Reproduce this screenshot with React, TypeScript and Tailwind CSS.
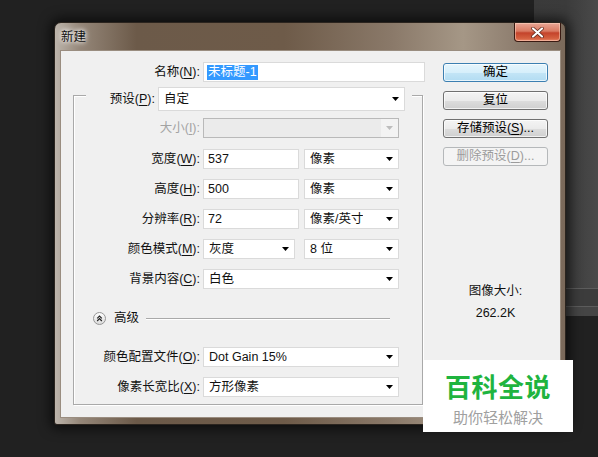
import React from 'react';

const F = "font-['Liberation_Sans','Noto_Sans_CJK_SC',sans-serif]";

function Mn({ pre, k }: { pre: string; k: string }) {
  return (
    <>
      {pre}(<span className="underline underline-offset-[2px]">{k}</span>):
    </>
  );
}

function Caret({ c = '#000' }: { c?: string }) {
  return (
    <svg width="7" height="4" viewBox="0 0 7 4" className="shrink-0">
      <path d="M0 0h7L3.5 4z" fill={c} />
    </svg>
  );
}

function Select({ w, v, h = 'h-[20px]' }: { w: string; v: string; h?: string }) {
  return (
    <div className={`${w} ${h} flex items-center justify-between border border-[#dadada] bg-white pl-[5px] pr-[5px]`}>
      <span className="truncate">{v}</span>
      <Caret />
    </div>
  );
}

function Field({ w, v }: { w: string; v: string }) {
  return (
    <div className={`${w} h-[20px] flex items-center border border-[#dadada] bg-white pl-[4px]`}>
      {v}
    </div>
  );
}

function Btn({ children, kind = 'normal' }: { children: React.ReactNode; kind?: 'default' | 'normal' | 'disabled' }) {
  const styles = {
    default:
      'border-[#3c7fb1] bg-[linear-gradient(#e6f5fc_0%,#d6effb_50%,#c3e5f6_51%,#b2dcf2_100%)] shadow-[inset_0_0_0_1px_rgba(255,255,255,0.7)] text-black',
    normal:
      'border-[#707070] bg-[linear-gradient(#f4f4f4_0%,#ebebeb_50%,#dddddd_51%,#cfcfcf_100%)] shadow-[inset_0_0_0_1px_rgba(255,255,255,0.7)] text-black',
    disabled: 'border-[#b5b8ba] bg-[#f4f4f4] text-[#9c9c9c]',
  }[kind];
  return (
    <div className={`h-[19px] w-[105px] rounded-[3px] border flex items-center justify-center leading-none ${styles}`}>
      {children}
    </div>
  );
}

function Row({ label, children, cls = 'mt-[10px]', dim = false }: { label: React.ReactNode; children: React.ReactNode; cls?: string; dim?: boolean }) {
  return (
    <div className={`flex items-center h-[20px] ${cls}`}>
      <div className={`w-[126px] shrink-0 text-right whitespace-nowrap ${dim ? 'text-[#a3a3a3]' : ''}`}>{label}</div>
      <div className="ml-[3px] flex items-center gap-[5px]">{children}</div>
    </div>
  );
}

function AdvIcon() {
  return (
    <svg width="13" height="13" viewBox="0 0 13 13" className="shrink-0">
      <defs>
        <linearGradient id="adv" x1="0" y1="0" x2="0" y2="1">
          <stop offset="0" stopColor="#ffffff" />
          <stop offset="1" stopColor="#d9d9d9" />
        </linearGradient>
      </defs>
      <circle cx="6.5" cy="6.5" r="6" fill="url(#adv)" stroke="#969696" />
      <path d="M4.2 6.3L6.5 4L8.8 6.3M4.2 9L6.5 6.7L8.8 9" fill="none" stroke="#222" strokeWidth="1.2" />
    </svg>
  );
}

export default function App() {
  return (
    <div className={`relative w-[598px] h-[457px] overflow-hidden bg-[#212121] flex justify-end text-[12.5px] text-[#111] ${F}`}>
      {/* app panel behind the dialog */}
      <div className="w-[64px] flex flex-col">
        <div className="h-[288px] bg-[linear-gradient(to_right,#3a3a3a_0%,#3b3b3b_50%,#4a4a4a_100%)]" />
        <div className="h-[1px] bg-[#5c5c5c]" />
        <div className="h-[17px] bg-[#3c3c3c]" />
        <div className="h-[1px] bg-[#5c5c5c]" />
        <div className="h-[9px] bg-[#454545]" />
      </div>

      {/* dialog window */}
      <div className="absolute left-[54px] top-[22px] w-[512px] h-[403px] rounded-t-[7px] rounded-b-[3px] border border-[#2b241e] bg-[linear-gradient(to_right,#bcb4ab_0%,#948678_5%,#6c5a49_16%,#6e5b49_45%,#8a7969_66%,#a59786_80%,#8f7f70_90%,#7a695a_100%)] shadow-[0_0_12px_4px_rgba(0,0,0,0.6)] flex flex-col">
        <div className="h-[27px] shrink-0 flex items-start justify-between">
          <span className="pl-[6px] mt-[6px] text-[12.5px] leading-[16px] text-[#111] [text-shadow:0_0_6px_#fff,0_0_4px_#fff]">新建</span>
          <div className="mr-[4px] w-[47px] h-[19px] rounded-b-[4px] border border-t-0 border-[#3a1a12] bg-[linear-gradient(#e9a796_0%,#d97a62_45%,#c4432b_55%,#d4603f_85%,#e8866a_100%)] flex items-center justify-center shadow-[inset_0_0_0_1px_rgba(255,220,200,0.5)]">
            <svg width="13" height="11" viewBox="0 0 13 11">
              <path d="M2 1.5L11 9.5M11 1.5L2 9.5" stroke="#5a2418" strokeWidth="3.6" strokeLinecap="round" />
              <path d="M2 1.5L11 9.5M11 1.5L2 9.5" stroke="#fff" strokeWidth="2.2" strokeLinecap="round" />
            </svg>
          </div>
        </div>

        <div className="ml-[5px] w-[501px] h-[368px] border border-[#9a8d80] bg-[#f0f0f0] flex">
          {/* form column */}
          <div className="w-[364px] pl-[12px] flex flex-col">
            <div className="mt-[11px] flex items-center h-[20px]">
              <div className="w-[127px] text-right whitespace-nowrap">
                <Mn pre="名称" k="N" />
              </div>
              <div className="ml-[3px] w-[222px] h-[20px] flex items-center border border-[#dadada] bg-white pl-[3px]">
                <span className="bg-[#3399ff] text-white leading-[15px] px-[1px]">未标题-1</span>
              </div>
            </div>

            <div className="mt-[13px] w-[350px] border border-[#a9a9a9] shadow-[inset_1px_1px_0_#fff,1px_1px_0_#fff] pb-[7px] flex flex-col">
              <div className="-mt-[9px] ml-[12px] w-[326px] h-[24px] bg-[#f0f0f0] flex items-center">
                <div className="w-[69px] text-right whitespace-nowrap">
                  <Mn pre="预设" k="P" />
                </div>
                <div className="ml-[3px]">
                  <Select w="w-[247px]" h="h-[24px]" v="自定" />
                </div>
              </div>

              <Row label={<Mn pre="大小" k="I" />} cls="mt-[7px]" dim>
                <div className="w-[196px] h-[20px] flex border border-[#b9b9b9] bg-[#ebebeb]">
                  <div className="flex-1" />
                  <div className="w-[17px] bg-[#f3f3f3] flex items-center justify-center">
                    <Caret c="#bdbdbd" />
                  </div>
                </div>
              </Row>
              <Row label={<Mn pre="宽度" k="W" />} cls="mt-[11px]">
                <Field w="w-[96px]" v="537" />
                <Select w="w-[95px]" v="像素" />
              </Row>
              <Row label={<Mn pre="高度" k="H" />}>
                <Field w="w-[96px]" v="500" />
                <Select w="w-[95px]" v="像素" />
              </Row>
              <Row label={<Mn pre="分辨率" k="R" />}>
                <Field w="w-[96px]" v="72" />
                <Select w="w-[95px]" v="像素/英寸" />
              </Row>
              <Row label={<Mn pre="颜色模式" k="M" />}>
                <Select w="w-[92px]" v="灰度" />
                <div className="ml-[4px]">
                  <Select w="w-[95px]" v="8 位" />
                </div>
              </Row>
              <Row label={<Mn pre="背景内容" k="C" />}>
                <Select w="w-[196px]" v="白色" />
              </Row>

              <div className="mt-[22px] h-[14px] flex items-center pl-[19px] mr-[32px]">
                <AdvIcon />
                <span className="ml-[8px]">高级</span>
                <div className="ml-[7px] flex-1 h-[1px] bg-[#a9a9a9] shadow-[0_1px_0_#fff]" />
              </div>

              <Row label={<Mn pre="颜色配置文件" k="O" />} cls="mt-[22px]">
                <Select w="w-[196px]" v="Dot Gain 15%" />
              </Row>
              <Row label={<Mn pre="像素长宽比" k="X" />}>
                <Select w="w-[196px]" v="方形像素" />
              </Row>
            </div>
          </div>

          {/* buttons column */}
          <div className="ml-[18px] w-[105px] flex flex-col items-center">
            <div className="mt-[12px]">
              <Btn kind="default">确定</Btn>
            </div>
            <div className="mt-[9px]">
              <Btn>复位</Btn>
            </div>
            <div className="mt-[9px]">
              <Btn>
                存储预设(<span className="underline underline-offset-[2px]">S</span>)...
              </Btn>
            </div>
            <div className="mt-[9px]">
              <Btn kind="disabled">
                删除预设(<span className="underline underline-offset-[2px]">D</span>)...
              </Btn>
            </div>
            <div className="mt-[117px] leading-[16px]">图像大小:</div>
            <div className="mt-[6px] leading-[16px]">262.2K</div>
          </div>
        </div>
      </div>

      {/* watermark */}
      <div className="absolute left-[423px] top-[360px] w-[150px] h-[72px] bg-white flex flex-col items-center">
        <div className="mt-[13px] text-[26px] leading-[26px] tracking-[0.5px] font-bold text-[#1fb43f] font-['Noto_Sans_CJK_SC',sans-serif]">百科全说</div>
        <div className="mt-[10px] text-[15px] leading-[15px] text-[#a0a0a0] font-['Noto_Sans_CJK_SC',sans-serif]">助你轻松解决</div>
      </div>
    </div>
  );
}
